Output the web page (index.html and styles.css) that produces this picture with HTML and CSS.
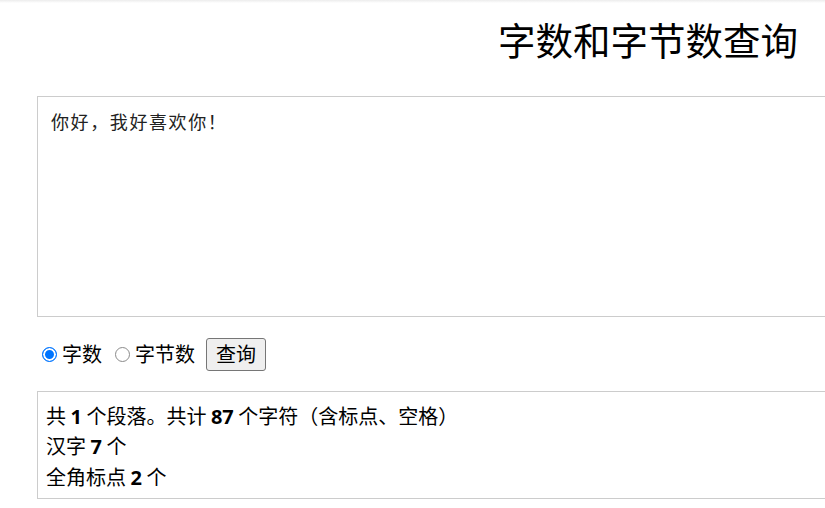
FILE: index.html
```html
<!DOCTYPE html>
<html lang="zh-CN">
<head>
<meta charset="utf-8">
<title>字数和字节数查询</title>
<link rel="stylesheet" href="styles.css">
</head>
<body>
<div class="topshade"></div>
<div class="page">
  <h1 class="title">字数和字节数查询</h1>
  <textarea class="input">你好，我好喜欢你！</textarea>
  <div class="controls">
    <label class="opt"><input type="radio" name="mode" checked><span>字数</span></label>
    <label class="opt"><input type="radio" name="mode"><span>字节数</span></label>
    <button class="btn" type="button">查询</button>
  </div>
  <div class="result">
    <div>共 <b>1</b> 个段落。共计 <b>87</b> 个字符（含标点、空格）</div>
    <div>汉字 <b>7</b> 个</div>
    <div>全角标点 <b>2</b> 个</div>
  </div>
</div>
</body>
</html>
```

FILE: styles.css
```css
html, body {
  margin: 0;
  padding: 0;
  overflow: hidden;
  background: #fff;
}
body {
  font-family: "Noto Sans CJK SC", "Noto Sans", sans-serif;
  color: #000;
  width: 825px;
  height: 508px;
  position: relative;
}
.topshade {
  height: 3px;
  background: linear-gradient(#ececec, #fff);
}
.page {
  padding-left: 37px;
  width: 900px;
}
.title {
  margin: 14px 0 0 0;
  width: 761px;
  text-align: right;
  font-size: 37.5px;
  font-weight: normal;
  line-height: 44px;
  height: 44px;
}
.input {
  display: block;
  margin-top: 35px;
  width: 860px;
  height: 221px;
  box-sizing: border-box;
  border: 1px solid #cccccc;
  padding: 12px 13px;
  font-family: "Noto Sans CJK SC", serif;
  font-size: 18px;
  letter-spacing: 1.6px;
  line-height: 24px;
  color: #222;
  resize: none;
  outline: none;
}
.controls {
  display: flex;
  align-items: center;
  height: 34px;
  margin-top: 20px;
  font-size: 20px;
}
.opt {
  display: flex;
  align-items: center;
  line-height: 24px;
}
.opt span {
  display: inline-block;
}
.opt input {
  appearance: none;
  -webkit-appearance: none;
  box-sizing: border-box;
  margin: 0 5px 0 5px;
  width: 15px;
  height: 15px;
  border-radius: 50%;
  border: 1.2px solid #8a8a8a;
  background: #fff;
}
.opt input:checked {
  border: 1.6px solid #0075ff;
  background: #0075ff;
  box-shadow: inset 0 0 0 2px #fff;
}
.opt + .opt {
  margin-left: 13px;
}
.opt + .opt input {
  margin-left: 0;
}
.btn {
  font-family: inherit;
  font-size: 20px;
  line-height: 24px;
  height: 33px;
  width: 60px;
  padding: 0;
  margin-left: 11px;
  border: 1px solid #767676;
  border-radius: 3px;
  background: #efefef;
  color: #000;
}
.result {
  margin-top: 20px;
  width: 860px;
  box-sizing: border-box;
  border: 1px solid #cccccc;
  padding: 9px 8px 6px;
  font-size: 20px;
  line-height: 29.3px;
}
.result b {
  font-family: "Open Sans", "Noto Sans", sans-serif;
  font-weight: 700;
}
```
